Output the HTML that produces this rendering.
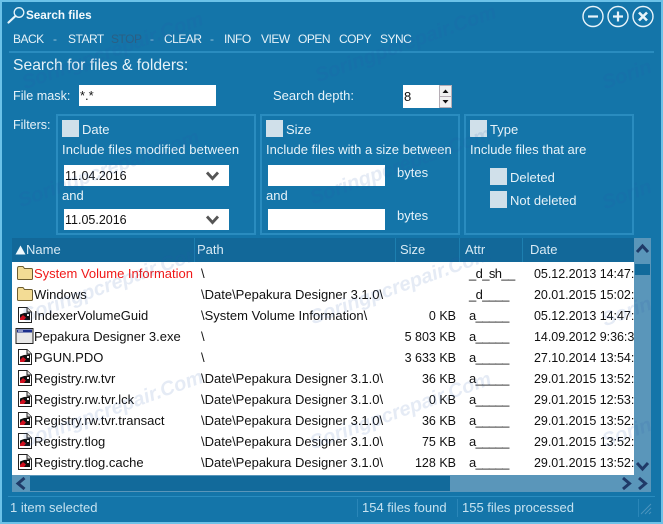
<!DOCTYPE html>
<html><head><meta charset="utf-8">
<style>
html,body{margin:0;padding:0}
#w{position:relative;width:663px;height:524px;overflow:hidden;background:#1475a9;font:13px "Liberation Sans","DejaVu Sans",sans-serif;color:#e6f2f8}
#w div,#w svg{position:absolute}
.t{white-space:nowrap;line-height:16px;height:16px}
.tb{top:31px;font-size:12px;letter-spacing:-.5px}
.b{border:2px solid #2a8cbf;box-sizing:border-box}
.c{background:#d0e0ea;width:17px;height:17px}
.i{background:#fff;color:#111}
.r{left:0;width:622px;height:21px;color:#111}
.r div{white-space:nowrap;top:3px;line-height:16px}
.n{left:22px}.p{left:189px}.s{right:178px;text-align:right;font-size:12.500px}.a{left:457px;letter-spacing:-.6px}.d{left:522px;width:100px;overflow:hidden;font-size:12.500px;letter-spacing:-.03px}
.h{top:4px;color:#d8eaf4;line-height:16px}
.ws{font:italic bold 20px/23px "Liberation Sans",sans-serif;color:rgba(40,90,175,.12);white-space:nowrap;transform:rotate(-20deg);transform-origin:left bottom;z-index:5}
</style></head><body>
<div id="w">
<svg width="0" height="0" style="position:absolute"><defs>
<symbol id="fo" viewBox="0 0 18 16"><path d="M1.500 3.500Q1.500 1.500 3 1.500H7L8.500 3.500H15.500Q16.500 3.500 16.500 5V13.500Q16.500 14.500 15.500 14.500H2.500Q1.500 14.500 1.500 13.500Z" fill="#f3dc95" stroke="#6e5e30"/></symbol>
<symbol id="do" viewBox="0 0 16 18"><path d="M1.500 1.500H10L14.500 6V16.500H1.500Z" fill="#fff" stroke="#222"/><path d="M10 1.500V6H14.500" fill="#ddd" stroke="#222"/><path d="M3 8.500L7 7L13 6.500V14H3Z" fill="#111"/><path d="M3 12L6 9L9 11.500L7 14H3Z" fill="#d01020"/><path d="M10 8H12V10H10Z" fill="#eee"/></symbol>
<symbol id="ex" viewBox="0 0 20 18"><rect x="1" y="1.500" width="17" height="15" fill="#e8e8e8" stroke="#222"/><rect x="2" y="2.500" width="15" height="3" fill="#1c2f8c"/><path d="M3 4H8" stroke="#fff"/></symbol>
</defs></svg>

<!-- window border -->
<div style="left:0;top:0;width:663px;height:2px;background:#6cc2e8"></div>
<div style="left:0;top:0;width:2px;height:524px;background:#6cc2e8"></div>
<div style="right:0;top:0;width:2px;height:524px;background:#6cc2e8"></div>
<div style="left:0;bottom:0;width:663px;height:2px;background:#6cc2e8"></div>

<!-- title -->
<svg style="left:6px;top:5px" width="20" height="20" viewBox="0 0 20 20"><circle cx="13" cy="7.500" r="4.800" fill="none" stroke="#e6f4fa" stroke-width="1.300"/><path d="M9.500 11L2.500 17.500" stroke="#e6f4fa" stroke-width="2.200" stroke-linecap="round"/></svg>
<div class="t" style="left:26px;top:8px;font-weight:bold;font-size:11.700px;color:#f4fafd">Search files</div>
<svg style="left:581px;top:4px" width="77" height="24" viewBox="0 0 77 24" fill="none" stroke="#e8f4fa">
<circle cx="12" cy="12.500" r="10" stroke-width="1.400"/><path d="M7 12.500H17" stroke-width="2.200"/>
<circle cx="37" cy="12.500" r="10" stroke-width="1.400"/><path d="M32 12.500H42M37 7.500V17.500" stroke-width="2.200"/>
<circle cx="62" cy="12.500" r="10" stroke-width="1.400"/><path d="M58 8.500L66 16.500M66 8.500L58 16.500" stroke-width="2.600"/></svg>

<!-- toolbar -->
<div class="t tb" style="left:13px">BACK</div>
<div class="t tb" style="left:53px;color:#9cc6dc">-</div>
<div class="t tb" style="left:68px">START</div>
<div class="t tb" style="left:111px;color:#2b5f84">STOP</div>
<div class="t tb" style="left:150px;color:#9cc6dc">-</div>
<div class="t tb" style="left:164px">CLEAR</div>
<div class="t tb" style="left:210px;color:#9cc6dc">-</div>
<div class="t tb" style="left:224px">INFO</div>
<div class="t tb" style="left:261px">VIEW</div>
<div class="t tb" style="left:298px">OPEN</div>
<div class="t tb" style="left:339px">COPY</div>
<div class="t tb" style="left:380px">SYNC</div>
<div style="left:9px;top:51px;width:645px;height:2px;background:#2a8cbf"></div>

<div class="t" style="left:13px;top:57px;font-size:15.700px;line-height:18px;height:18px">Search for files &amp; folders:</div>
<div class="t" style="left:13px;top:88px;font-size:12.600px">File mask:</div>
<div class="i" style="left:79px;top:85px;width:137px;height:21px"><div class="t" style="left:1px;top:3px">*.*</div></div>
<div class="t" style="left:273px;top:88px">Search depth:</div>
<div class="i" style="left:403px;top:85px;width:49px;height:23px"><div class="t" style="left:1px;top:4px">8</div></div>
<div style="left:439px;top:85px;width:13px;height:23px;background:#f0f0f0;box-shadow:inset 0 0 0 1px #b5adb5"></div>
<div style="left:439px;top:96px;width:13px;height:1px;background:#b5adb5"></div>
<svg style="left:439px;top:85px" width="13" height="23"><path d="M3.500 8L6.500 4.500L9.500 8Z" fill="#111"/><path d="M3.500 15L6.500 18.500L9.500 15Z" fill="#111"/></svg>

<div class="t" style="left:13px;top:117px;font-size:12.500px">Filters:</div>

<!-- groups -->
<div class="b" style="left:56px;top:114px;width:200px;height:121px"></div>
<div class="b" style="left:260px;top:114px;width:200px;height:121px"></div>
<div class="b" style="left:464px;top:114px;width:170px;height:121px"></div>

<div class="c" style="left:62px;top:120px"></div>
<div class="t" style="left:82px;top:122px">Date</div>
<div class="t" style="left:62px;top:142px;letter-spacing:.1px">Include files modified between</div>
<div class="i" style="left:64px;top:165px;width:165px;height:21px"><div class="t" style="left:1px;top:3px;font-size:12.500px">11.04.2016</div></div>
<svg style="left:205px;top:170px" width="16" height="12"><path d="M2 2.500L7.500 8.500L13 2.500" fill="none" stroke="#555" stroke-width="2.800"/></svg>
<div class="t" style="left:62px;top:188px">and</div>
<div class="i" style="left:64px;top:209px;width:165px;height:21px"><div class="t" style="left:1px;top:3px;font-size:12.500px">11.05.2016</div></div>
<svg style="left:205px;top:214px" width="16" height="12"><path d="M2 2.500L7.500 8.500L13 2.500" fill="none" stroke="#555" stroke-width="2.800"/></svg>

<div class="c" style="left:266px;top:120px"></div>
<div class="t" style="left:286px;top:122px">Size</div>
<div class="t" style="left:266px;top:142px">Include files with a size between</div>
<div class="i" style="left:268px;top:165px;width:117px;height:21px"></div>
<div class="t" style="left:397px;top:165px">bytes</div>
<div class="t" style="left:266px;top:188px">and</div>
<div class="i" style="left:268px;top:209px;width:117px;height:21px"></div>
<div class="t" style="left:397px;top:208px">bytes</div>

<div class="c" style="left:470px;top:120px"></div>
<div class="t" style="left:490px;top:122px">Type</div>
<div class="t" style="left:470px;top:142px">Include files that are</div>
<div class="c" style="left:490px;top:168px"></div>
<div class="t" style="left:510px;top:170px">Deleted</div>
<div class="c" style="left:490px;top:191px"></div>
<div class="t" style="left:510px;top:193px">Not deleted</div>

<!-- list -->
<div style="left:12px;top:238px;width:622px;height:24px;background:#126899">
<div style="left:182px;top:0;width:1px;height:24px;background:#1d7fb0"></div>
<div style="left:383px;top:0;width:1px;height:24px;background:#1d7fb0"></div>
<div style="left:447px;top:0;width:1px;height:24px;background:#1d7fb0"></div>
<div style="left:510px;top:0;width:1px;height:24px;background:#1d7fb0"></div>
<svg style="left:3px;top:7px" width="12" height="10"><path d="M0.500 9.500L5.500 0.500L10.500 9.500Z" fill="#f0f8fc"/></svg>
<div class="h" style="left:14px">Name</div><div class="h" style="left:185px">Path</div><div class="h" style="left:388px">Size</div><div class="h" style="left:453px">Attr</div><div class="h" style="left:518px">Date</div>
</div>
<div style="left:12px;top:262px;width:622px;height:213px;background:#fff;overflow:hidden">
<div class="r" style="top:1px"><svg style="left:4px;top:2px" width="18" height="16"><use href="#fo"/></svg><div class="n" style="color:#f01818">System Volume Information</div><div class="p">\</div><div class="a">_d_sh__</div><div class="d">05.12.2013 14:47:</div></div>
<div class="r" style="top:22px"><svg style="left:4px;top:2px" width="18" height="16"><use href="#fo"/></svg><div class="n">Windows</div><div class="p">\Date\Pepakura Designer 3.1.0\</div><div class="a">_d____</div><div class="d">20.01.2015 15:02:</div></div>
<div class="r" style="top:43px"><svg style="left:5px;top:1px" width="16" height="18"><use href="#do"/></svg><div class="n">IndexerVolumeGuid</div><div class="p">\System Volume Information\</div><div class="s">0 KB</div><div class="a">a_____</div><div class="d">05.12.2013 14:47:</div></div>
<div class="r" style="top:64px"><svg style="left:3px;top:1px" width="20" height="18"><use href="#ex"/></svg><div class="n">Pepakura Designer 3.exe</div><div class="p">\</div><div class="s">5 803 KB</div><div class="a">a_____</div><div class="d">14.09.2012 9:36:3</div></div>
<div class="r" style="top:85px"><svg style="left:5px;top:1px" width="16" height="18"><use href="#do"/></svg><div class="n">PGUN.PDO</div><div class="p">\</div><div class="s">3 633 KB</div><div class="a">a_____</div><div class="d">27.10.2014 13:54:</div></div>
<div class="r" style="top:106px"><svg style="left:5px;top:1px" width="16" height="18"><use href="#do"/></svg><div class="n">Registry.rw.tvr</div><div class="p">\Date\Pepakura Designer 3.1.0\</div><div class="s">36 KB</div><div class="a">a_____</div><div class="d">29.01.2015 13:52:</div></div>
<div class="r" style="top:127px"><svg style="left:5px;top:1px" width="16" height="18"><use href="#do"/></svg><div class="n">Registry.rw.tvr.lck</div><div class="p">\Date\Pepakura Designer 3.1.0\</div><div class="s">0 KB</div><div class="a">a_____</div><div class="d">29.01.2015 12:53:</div></div>
<div class="r" style="top:148px"><svg style="left:5px;top:1px" width="16" height="18"><use href="#do"/></svg><div class="n">Registry.rw.tvr.transact</div><div class="p">\Date\Pepakura Designer 3.1.0\</div><div class="s">36 KB</div><div class="a">a_____</div><div class="d">29.01.2015 13:52:</div></div>
<div class="r" style="top:169px"><svg style="left:5px;top:1px" width="16" height="18"><use href="#do"/></svg><div class="n">Registry.tlog</div><div class="p">\Date\Pepakura Designer 3.1.0\</div><div class="s">75 KB</div><div class="a">a_____</div><div class="d">29.01.2015 13:52:</div></div>
<div class="r" style="top:190px"><svg style="left:5px;top:1px" width="16" height="18"><use href="#do"/></svg><div class="n">Registry.tlog.cache</div><div class="p">\Date\Pepakura Designer 3.1.0\</div><div class="s">128 KB</div><div class="a">a_____</div><div class="d">29.01.2015 13:52:</div></div>
</div>

<!-- scrollbars -->
<div style="left:634px;top:238px;width:17px;height:254px;background:#5a96ba"></div>
<div style="left:635px;top:264px;width:15px;height:11px;background:#126a9b"></div>
<svg style="left:634px;top:242px" width="17" height="14"><path d="M3 10L8.500 4L14 10" fill="none" stroke="#1f3a68" stroke-width="3"/></svg>
<svg style="left:634px;top:459px" width="17" height="14"><path d="M3 4L8.500 10L14 4" fill="none" stroke="#1f3a68" stroke-width="3"/></svg>
<div style="left:12px;top:475px;width:622px;height:17px;background:#5a96ba"></div>
<div style="left:30px;top:476px;width:420px;height:15px;background:#126a9b"></div>
<svg style="left:12px;top:475px" width="18" height="17"><path d="M12.500 3L6 8.500L12.500 14" fill="none" stroke="#1f3a68" stroke-width="3"/></svg>
<svg style="left:618px;top:475px" width="18" height="17"><path d="M5 3L11.500 8.500L5 14" fill="none" stroke="#1f3a68" stroke-width="3"/></svg>
<svg style="left:634px;top:475px" width="18" height="17"><path d="M5 3L11.500 8.500L5 14" fill="none" stroke="#1f3a68" stroke-width="3"/></svg>

<!-- status -->
<div style="left:8px;top:496px;width:647px;height:1px;background:#2a8cbf"></div>
<div style="left:357px;top:499px;width:1px;height:18px;background:#2a86b8"></div>
<div style="left:457px;top:499px;width:1px;height:18px;background:#2a86b8"></div>
<div style="left:638px;top:499px;width:1px;height:18px;background:#2a86b8"></div>
<div class="t" style="left:10px;top:500px;color:#c6e2f0">1 item selected</div>
<div class="t" style="left:362px;top:500px;color:#c6e2f0">154 files found</div>
<div class="t" style="left:462px;top:500px;color:#c6e2f0">155 files processed</div>
<svg style="left:640px;top:503px" width="12" height="12"><path d="M1 11L11 1M5 11L11 5M9 11L11 9" stroke="#4a94bd"/></svg>

<!-- watermarks -->
<div class="ws" style="left:27px;top:72px">Soringpcrepair.Com</div>
<div class="ws" style="left:23px;top:190px">Soringpcrepair.Com</div>
<div class="ws" style="left:27px;top:305px">Soringpcrepair.Com</div>
<div class="ws" style="left:27px;top:430px">Soringpcrepair.Com</div>
<div class="ws" style="left:320px;top:65px">Soringpcrepair.Com</div>
<div class="ws" style="left:315px;top:187px">Soringpcrepair.Com</div>
<div class="ws" style="left:315px;top:307px">Soringpcrepair.Com</div>
<div class="ws" style="left:315px;top:432px">Soringpcrepair.Com</div>
<div class="ws" style="left:607px;top:72px">Sorin</div>
<div class="ws" style="left:607px;top:192px">Sorin</div>
<div class="ws" style="left:607px;top:309px">Sorin</div>
<div class="ws" style="left:607px;top:430px">Sorin</div>
</div>
</body></html>
